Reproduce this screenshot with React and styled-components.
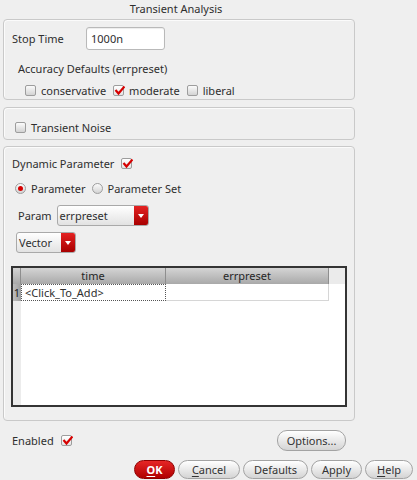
import React from 'react';
import styled, { createGlobalStyle } from 'styled-components';

const GlobalStyle = createGlobalStyle`
  html, body { margin: 0; padding: 0; background: #efefef; }
  body {
    font-family: "Noto Sans", "Open Sans", sans-serif;
    font-size: 11px;
    color: #2e2e2e;
  }
`;

const Dialog = styled.div`
  width: 417px;
  height: 480px;
  box-sizing: border-box;
  padding-left: 3px;
  display: flex;
  flex-direction: column;
  background: #efefef;
  overflow: hidden;
`;

const Column = styled.div`
  width: 352px;
  display: flex;
  flex-direction: column;
`;

const Title = styled.div`
  height: 19px;
  line-height: 18px;
  text-align: center;
  padding-right: 6px;
`;

const Group = styled.div`
  box-sizing: border-box;
  height: ${(p) => p.h}px;
  margin-top: ${(p) => p.mt || 0}px;
  padding: ${(p) => p.pt || 0}px 8px 0 8px;
  border: 1px solid #c9c9c9;
  border-radius: 4px;
  box-shadow: inset 1px 1px 0 #fbfbfb;
  display: flex;
  flex-direction: column;
`;

const Row = styled.div`
  display: flex;
  align-items: center;
  height: ${(p) => p.h || 18}px;
  margin-top: ${(p) => p.mt || 0}px;
  margin-left: ${(p) => p.ml || 0}px;
  gap: ${(p) => p.gap || 0}px;
`;

const Label = styled.span`
  width: ${(p) => (p.w ? `${p.w}px` : 'auto')};
  white-space: nowrap;
`;

const TextInput = styled.div`
  box-sizing: border-box;
  width: 79px;
  height: 23px;
  background: #fff;
  border: 1px solid #b9b9b9;
  border-radius: 3px;
  box-shadow: inset 0 1px 1px rgba(0,0,0,0.08);
  padding-left: 4px;
  line-height: 21px;
`;

const Item = styled.label`
  display: flex;
  align-items: center;
  gap: 5px;
  white-space: nowrap;
`;

const Box = styled.span`
  box-sizing: border-box;
  width: 11px;
  height: 11px;
  border: 1px solid #9d9d9d;
  border-radius: 2px;
  background: ${(p) => (p.on ? 'linear-gradient(#ffffff, #e4e4e4)' : 'linear-gradient(#fbfbfb, #d3d3d3)')};
  position: relative;
  flex: none;
`;

const Tick = styled.svg`
  position: absolute;
  left: 0;
  top: -1px;
`;

const Check = ({ on }) => (
  <Box on={on ? 1 : 0}>
    {on && (
      <Tick width="11" height="11" viewBox="0 0 11 11">
        <polyline points="1.5,5 4.5,8.5 10.5,1.5" fill="none" stroke="#d60000" strokeWidth="2.2" />
      </Tick>
    )}
  </Box>
);

const RadioRing = styled.span`
  box-sizing: border-box;
  width: 11px;
  height: 11px;
  border: 1px solid #9d9d9d;
  border-radius: 50%;
  background: linear-gradient(#fbfbfb, #d3d3d3);
  display: flex;
  align-items: center;
  justify-content: center;
  flex: none;
`;

const RadioDot = styled.span`
  width: 5px;
  height: 5px;
  border-radius: 50%;
  background: #d60000;
`;

const Radio = ({ on }) => <RadioRing>{on && <RadioDot />}</RadioRing>;

const Select = styled.div`
  box-sizing: border-box;
  width: ${(p) => p.w}px;
  height: 21px;
  display: flex;
  border: 1px solid #a9a9a9;
  border-radius: 3px;
  background: linear-gradient(#ffffff, #e2e2e2);
  overflow: hidden;
`;

const SelectText = styled.span`
  flex: 1;
  padding-left: 2px;
  line-height: 19px;
`;

const SelectArrow = styled.span`
  width: 14px;
  background: linear-gradient(#e42222, #a80000);
  display: flex;
  align-items: center;
  justify-content: center;
  &::after {
    content: '';
    border-left: 3px solid transparent;
    border-right: 3px solid transparent;
    border-top: 4px solid #fff;
  }
`;

const Table = styled.div`
  box-sizing: border-box;
  width: 336px;
  height: 141px;
  margin: 13px 0 0 -1px;
  border: 2px solid #343434;
  background: #fff;
  display: flex;
  flex-direction: column;
`;

const TRow = styled.div`
  display: flex;
  height: ${(p) => p.h}px;
  flex: none;
`;

const HeadCell = styled.div`
  box-sizing: border-box;
  width: ${(p) => p.w}px;
  background: linear-gradient(#d4d4d4, #a9a9a9);
  border-right: 1px solid #8e8e8e;
  text-align: center;
  line-height: 16px;
  color: #262626;
`;

const HeadFill = styled.div`
  flex: 1;
  background: #ebebeb;
`;

const RowHead = styled.div`
  box-sizing: border-box;
  width: 8px;
  background: linear-gradient(90deg, #bdbdbd, #9f9f9f);
  line-height: 17px;
  text-align: center;
  color: #222;
`;

const Cell = styled.div`
  box-sizing: border-box;
  width: ${(p) => p.w}px;
  padding-left: 3px;
  line-height: 15px;
  border: ${(p) => (p.focus ? '1px dotted #555' : 'none')};
  border-right: 1px ${(p) => (p.focus ? 'dotted #555' : 'solid #d6d6d6')};
  border-bottom: 1px solid ${(p) => (p.focus ? '#555' : '#d6d6d6')};
  border-bottom-style: ${(p) => (p.focus ? 'dotted' : 'solid')};
`;

const Body = styled.div`
  flex: 1;
  display: flex;
`;

const Stripe = styled.div`
  width: 8px;
  background: #ececec;
`;

const Footer = styled.div`
  display: flex;
  align-items: center;
  justify-content: space-between;
  height: 21px;
  margin-top: 9px;
  padding: 0 9px 0 9px;
`;

const Button = styled.div`
  box-sizing: border-box;
  width: ${(p) => p.w}px;
  height: ${(p) => p.h || 19}px;
  border-radius: 10px;
  border: 1px solid ${(p) => (p.primary ? '#8e0000' : '#a3a3a3')};
  background: ${(p) => (p.primary ? 'linear-gradient(#e62626, #b00000)' : 'linear-gradient(#ffffff, #d4d4d4)')};
  color: ${(p) => (p.primary ? '#fff' : '#333')};
  font-weight: ${(p) => (p.primary ? 700 : 400)};
  display: flex;
  align-items: center;
  justify-content: center;
  flex: none;
  u { text-decoration: underline; text-underline-offset: 2px; }
`;

const ButtonBar = styled.div`
  display: flex;
  justify-content: flex-end;
  gap: 3px;
  margin-top: 9px;
  padding-right: 4px;
`;

export default function App() {
  return (
    <>
      <GlobalStyle />
      <Dialog>
        <Column>
          <Title>Transient Analysis</Title>

          <Group h={81} pt={7}>
            <Row h={23}>
              <Label w={74}>Stop Time</Label>
              <TextInput>1000n</TextInput>
            </Row>
            <Row mt={9} ml={6}>Accuracy Defaults (errpreset)</Row>
            <Row mt={4} ml={13} gap={7}>
              <Item><Check />conservative</Item>
              <Item><Check on />moderate</Item>
              <Item><Check />liberal</Item>
            </Row>
          </Group>

          <Group h={33} mt={7} pt={10}>
            <Row ml={3}>
              <Item><Check />Transient Noise</Item>
            </Row>
          </Group>

          <Group h={275} mt={6} pt={7}>
            <Row gap={7}>
              <Label>Dynamic Parameter</Label>
              <Check on />
            </Row>
            <Row mt={7} ml={3} gap={6}>
              <Item><Radio on />Parameter</Item>
              <Item><Radio />Parameter Set</Item>
            </Row>
            <Row h={21} mt={8} ml={6} gap={5}>
              <Label>Param</Label>
              <Select w={92}>
                <SelectText>errpreset</SelectText>
                <SelectArrow />
              </Select>
            </Row>
            <Row h={21} mt={6} ml={4}>
              <Select w={60}>
                <SelectText>Vector</SelectText>
                <SelectArrow />
              </Select>
            </Row>
            <Table>
              <TRow h={16}>
                <HeadCell w={8} />
                <HeadCell w={145}>time</HeadCell>
                <HeadCell w={163}>errpreset</HeadCell>
                <HeadFill />
              </TRow>
              <TRow h={17}>
                <RowHead>1</RowHead>
                <Cell w={145} focus>&lt;Click_To_Add&gt;</Cell>
                <Cell w={163} />
              </TRow>
              <Body>
                <Stripe />
              </Body>
            </Table>
          </Group>

          <Footer>
            <Row gap={7}>
              <Label>Enabled</Label>
              <Check on />
            </Row>
            <Button w={69} h={21}>Options...</Button>
          </Footer>
        </Column>

        <ButtonBar>
          <Button w={41} primary><u>O</u>K</Button>
          <Button w={62}><u>C</u>ancel</Button>
          <Button w={65}>Defaults</Button>
          <Button w={51}>Apply</Button>
          <Button w={48}><u>H</u>elp</Button>
        </ButtonBar>
      </Dialog>
    </>
  );
}
